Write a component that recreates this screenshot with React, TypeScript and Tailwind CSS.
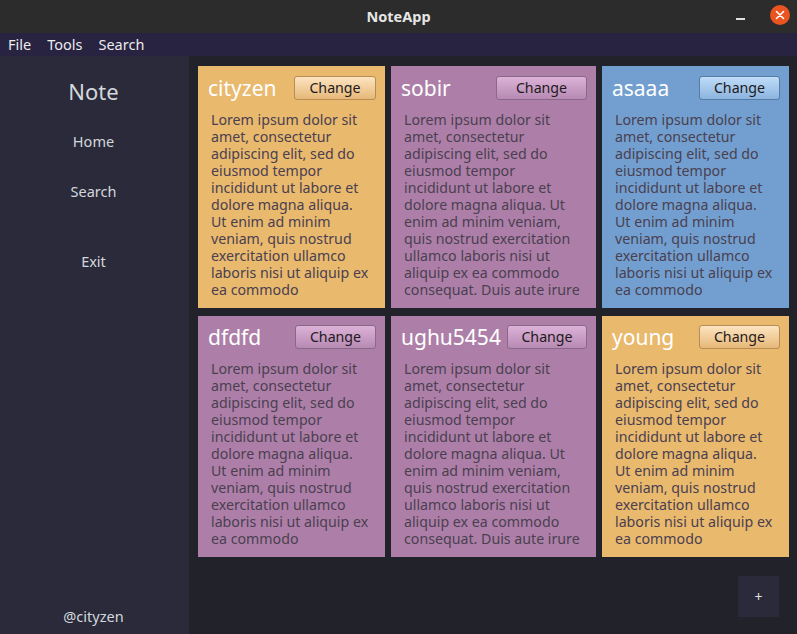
import React from "react";

const L1 = [
  "Lorem ipsum dolor sit",
  "amet, consectetur",
  "adipiscing elit, sed do",
  "eiusmod tempor",
  "incididunt ut labore et",
  "dolore magna aliqua.",
  "Ut enim ad minim",
  "veniam, quis nostrud",
  "exercitation ullamco",
  "laboris nisi ut aliquip ex",
  "ea commodo",
];
const L2 = [
  "Lorem ipsum dolor sit",
  "amet, consectetur",
  "adipiscing elit, sed do",
  "eiusmod tempor",
  "incididunt ut labore et",
  "dolore magna aliqua. Ut",
  "enim ad minim veniam,",
  "quis nostrud exercitation",
  "ullamco laboris nisi ut",
  "aliquip ex ea commodo",
  "consequat. Duis aute irure",
];

type Theme = "orange" | "purple" | "blue";

const cardBg: Record<Theme, string> = {
  orange: "bg-[#e9b96e]",
  purple: "bg-[#ad7fa8]",
  blue: "bg-[#729fcf]",
};
const btn: Record<Theme, string> = {
  orange: "bg-gradient-to-b from-[#fde4c0] to-[#e6b878] border-[#b78c55]",
  purple: "bg-gradient-to-b from-[#ddb2d9] to-[#b68ab2] border-[#8a688a]",
  blue: "bg-gradient-to-b from-[#c0ddf9] to-[#8cb4df] border-[#567ca3]",
};

const cards: { title: string; theme: Theme; lines: string[]; bw: string; top: string }[] = [
  { title: "cityzen", theme: "orange", lines: L1, bw: "w-[82px]", top: "pt-[10px]" },
  { title: "sobir", theme: "purple", lines: L2, bw: "w-[91px]", top: "pt-[10px]" },
  { title: "asaaa", theme: "blue", lines: L1, bw: "w-[81px]", top: "pt-[10px]" },
  { title: "dfdfd", theme: "purple", lines: L1, bw: "w-[81px]", top: "pt-[9px]" },
  { title: "ughu5454", theme: "purple", lines: L2, bw: "w-[80px]", top: "pt-[9px]" },
  { title: "young", theme: "orange", lines: L1, bw: "w-[81px]", top: "pt-[9px]" },
];

function Card({ c }: { c: (typeof cards)[number] }) {
  return (
    <div className={`${cardBg[c.theme]} overflow-hidden flex flex-col ${c.top}`}>
      <div className="flex items-center justify-between pl-[10px] pr-[9px] h-[24px]">
        <span className="text-white text-[21px] leading-none whitespace-nowrap">{c.title}</span>
        <button
          className={`${btn[c.theme]} ${c.bw} h-[24px] border rounded-[3px] text-[#1e1a20] text-[14.2px] leading-none flex items-center justify-center`}
        >
          Change
        </button>
      </div>
      <div className="pl-[13px] pt-[11px] text-[#4a4050] text-[14.2px] leading-[17px]">
        {c.lines.map((l, i) => (
          <div key={i} className="whitespace-nowrap h-[17px]">
            {l}
          </div>
        ))}
      </div>
    </div>
  );
}

export default function App() {
  return (
    <div
      className="w-[797px] h-[634px] flex flex-col overflow-hidden"
      style={{ fontFamily: '"Noto Sans", "Open Sans", sans-serif' }}
    >
      {/* title bar */}
      <div className="h-[33px] bg-[#2c2c2c] grid grid-cols-[1fr_auto_1fr] items-center">
        <div />
        <div className="text-[#e6e6e6] font-bold text-[14.5px]">NoteApp</div>
        <div className="flex items-center justify-end gap-[25px] pr-[7px]">
          <div className="w-[9px] h-[2px] bg-[#e0e0e0] mt-[4px]" />
          <div className="w-[20px] h-[20px] rounded-full bg-[#e95420] flex items-center justify-center mt-[-3px]">
            <svg width="10" height="10" viewBox="0 0 10 10">
              <path d="M1.5 1.5 L8.5 8.5 M8.5 1.5 L1.5 8.5" stroke="#ffffff" strokeWidth="1.6" strokeLinecap="round" />
            </svg>
          </div>
        </div>
      </div>
      {/* menu bar */}
      <div className="h-[23px] bg-[#272340] flex items-center pl-[8px] gap-[16px] text-[#ececec] text-[14.5px]">
        <span>File</span>
        <span>Tools</span>
        <span>Search</span>
      </div>
      {/* body */}
      <div className="flex-1 flex min-h-0">
        <div className="w-[189px] bg-[#2b2a3a] flex flex-col items-center text-[#d3d8dc] pr-[2px]">
          <div className="text-[22px] mt-[20px] leading-[30px]">Note</div>
          <div className="text-[14.5px] mt-[25px] leading-[20px]">Home</div>
          <div className="text-[14.5px] mt-[30px] leading-[20px]">Search</div>
          <div className="text-[14.5px] mt-[50px] leading-[20px]">Exit</div>
          <div className="flex-1" />
          <div className="text-[14.5px] mb-[8px] leading-[20px]">@cityzen</div>
        </div>
        <div className="flex-1 bg-[#22222b] flex flex-col pt-[10px] pl-[9px] pr-[8px]">
          <div className="grid grid-cols-[187px_205px_187px] grid-rows-[242px_241px] gap-x-[6px] gap-y-[8px]">
            {cards.map((c, i) => (
              <Card key={i} c={c} />
            ))}
          </div>
          <div className="flex justify-end mt-[19px] pr-[10px]">
            <button className="w-[41px] h-[41px] bg-[#2b2a3b] text-[#e0e0e0] text-[14px] flex items-center justify-center">
              +
            </button>
          </div>
        </div>
      </div>
    </div>
  );
}
